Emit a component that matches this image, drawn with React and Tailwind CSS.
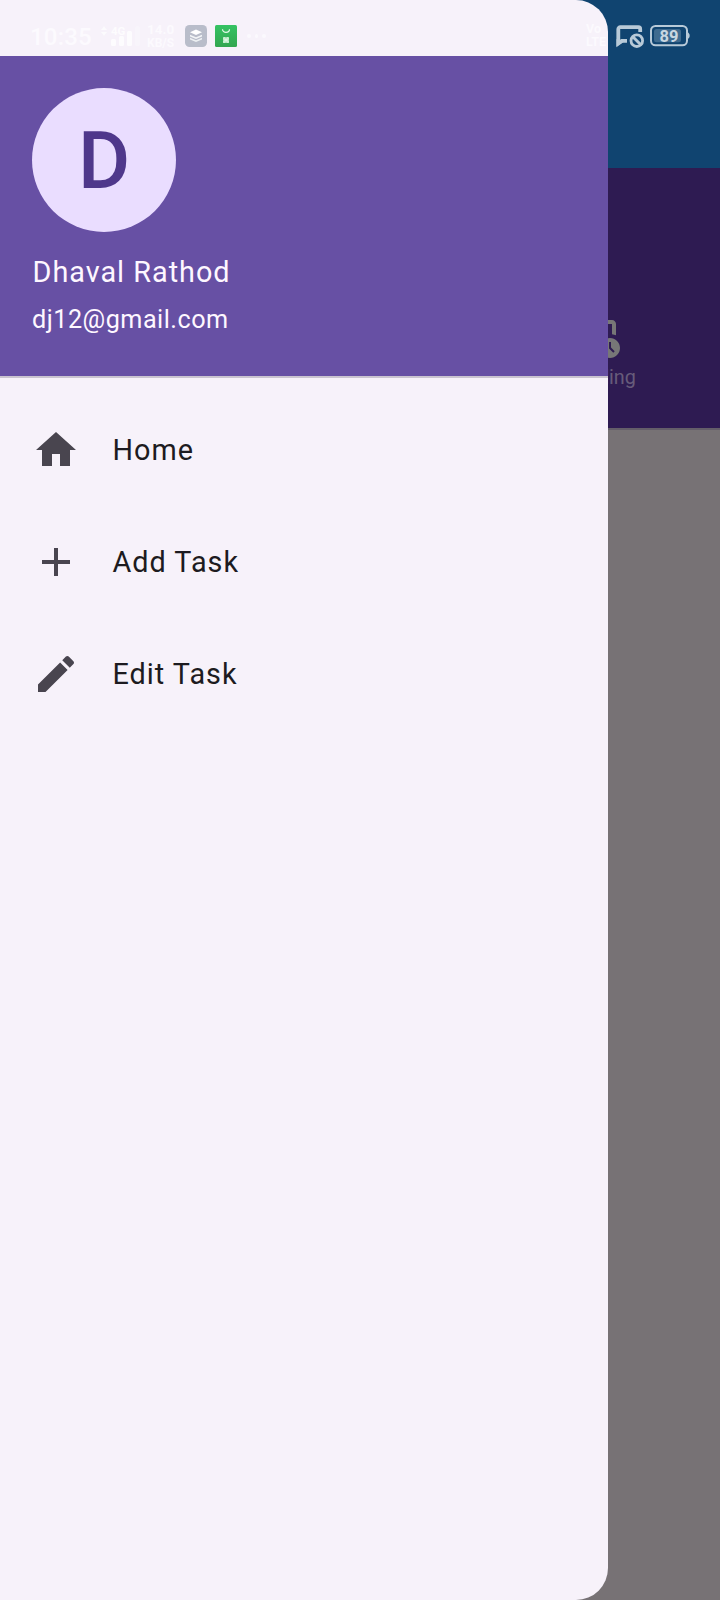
import React from "react";

function HomeIcon() {
  return (
    <svg viewBox="0 0 24 24" className="size-12 shrink-0 fill-[#49454f]">
      <path d="M10 20v-6h4v6h5v-8h3L12 3 2 12h3v8z" />
    </svg>
  );
}

function AddIcon() {
  return (
    <svg viewBox="0 0 24 24" className="size-12 shrink-0 fill-[#49454f]">
      <path d="M19 13h-6v6h-2v-6H5v-2h6V5h2v6h6v2z" />
    </svg>
  );
}

function EditIcon() {
  return (
    <svg viewBox="0 0 24 24" className="size-12 shrink-0 fill-[#49454f]">
      <path d="M3 17.25V21h3.75L17.81 9.94l-3.75-3.75L3 17.25zM20.71 7.04c.39-.39.39-1.02 0-1.41l-2.34-2.34c-.39-.39-1.02-.39-1.41 0l-1.83 1.83 3.75 3.75 1.83-1.83z" />
    </svg>
  );
}

function PendingIcon() {
  return (
    <svg viewBox="0 0 24 24" className="size-12 fill-[#777777]">
      <path d="M17 12c-2.76 0-5 2.24-5 5s2.24 5 5 5 5-2.24 5-5-2.24-5-5-5zm1.65 7.35L16.5 17.2V14h1v2.79l1.85 1.85-.7.71zM18 3h-3.18C14.4 1.84 13.3 1 12 1s-2.4.84-2.82 2H6c-1.1 0-2 .9-2 2v15c0 1.1.9 2 2 2h6.11c-.59-.57-1.07-1.25-1.42-2H6V5h2v3h8V5h2v5.08c.71.1 1.38.31 2 .6V5c0-1.1-.9-2-2-2z" />
    </svg>
  );
}

function SignalIcon() {
  return (
    <svg viewBox="0 0 40 22" className="h-[22px] w-10 fill-[#fdfcfe]">
      <path d="M0 5l3-4 3 4zM0 7h6l-3 4z" fillOpacity=".8" />
      <rect x="10" y="14" width="5" height="7" rx="1.5" />
      <rect x="18" y="11" width="5" height="10" rx="1.5" />
      <rect x="26" y="6" width="5" height="15" rx="1.5" />
      <rect x="34" y="1" width="5" height="20" rx="1.5" fillOpacity=".3" />
      <text x="10" y="9.5" fontSize="11.5" fontWeight="700">4G</text>
    </svg>
  );
}

function LayersBadge() {
  return (
    <svg viewBox="0 0 22 22" className="size-[22px]">
      <rect width="22" height="22" rx="4.5" fill="#b9bdca" />
      <path d="M5 12.8l6 2.5 6-2.5v1.6L11 17l-6-2.6z" fill="#edf0f3" />
      <path d="M5 9.7l6 2.5 6-2.5v1.7L11 14l-6-2.6z" fill="#f3f5f7" />
      <path d="M11 4.5l6 2.7-6 2.7-6-2.7z" fill="#fff" />
    </svg>
  );
}

function ShopBadge() {
  return (
    <svg viewBox="0 0 22 22" className="size-[22px]">
      <defs>
        <linearGradient id="shop" x1="0" y1="0" x2="0" y2="1">
          <stop offset="0" stopColor="#35c363" />
          <stop offset="1" stopColor="#33a650" />
        </linearGradient>
      </defs>
      <rect width="22" height="22" rx="1.5" fill="url(#shop)" />
      <path d="M7.5 4.3c0 4 7 4 7 0" fill="none" stroke="#e2f8e8" strokeWidth="1.2" />
      <rect x="8" y="12" width="2.9" height="2.9" rx=".4" fill="#c9f0d2" />
      <rect x="11.1" y="12" width="2.9" height="2.9" rx=".4" fill="#c9f0d2" />
      <rect x="8" y="15.1" width="2.9" height="2.9" rx=".4" fill="#c9f0d2" />
      <rect x="11.1" y="15.1" width="2.9" height="2.9" rx=".4" fill="#c9f0d2" />
      <circle cx="11" cy="15" r="1.5" fill="#dcf6e2" />
    </svg>
  );
}

function MessageBlockedIcon() {
  return (
    <svg viewBox="0 0 28 24" className="h-6 w-7" fill="none" stroke="#b8cad8">
      <path d="M24.2 7V4a1.8 1.8 0 0 0-1.8-1.8H4.3A2 2 0 0 0 2.3 4.2V18.5L5.8 15.9H11" strokeWidth="3.8" />
      <path d="M.5 14v7.5l7-4.5z" fill="#b8cad8" stroke="none" />
      <circle cx="20.8" cy="15.7" r="5.8" strokeWidth="2.8" />
      <path d="M16.8 11.7l8 8" strokeWidth="3" />
    </svg>
  );
}

function BatteryIcon() {
  return (
    <svg viewBox="0 0 40 22" className="h-[22px] w-10">
      <rect x="1" y="1" width="36" height="19.3" rx="4.5" fill="none" stroke="#b8cad8" strokeWidth="2" />
      <path d="M37.5 7.3c2.9 1.2 2.9 5.6 0 6.8z" fill="#b8cad8" />
      <rect x="4" y="4" width="27" height="13.2" rx="2.5" fill="#3f6b8f" />
      <text x="19" y="16.6" textAnchor="middle" fontSize="16.5" fontWeight="700" fill="#c9d7e1">89</text>
    </svg>
  );
}

function StatusBar() {
  return (
    <div className="absolute inset-x-0 top-0 flex h-14 items-start justify-between pr-[30px] pl-[30px] text-[#fcfafe]">
      <div className="flex items-start pt-[25px]">
        <span className="w-[71px] text-[24px] leading-[24px] font-medium tracking-[0.2px]">10:35</span>
        <SignalIcon />
        <div className="ml-[6px] flex w-[38px] flex-col font-bold">
          <span className="-mt-[2px] text-[13.5px] leading-[13.5px]">14.0</span>
          <span className="text-[12px] leading-[12px]">KB/S</span>
        </div>
        <LayersBadge />
        <span className="w-2" />
        <ShopBadge />
        <div className="flex gap-1 pt-[9px] pl-[10px]">
          <span className="size-[3.5px] rounded-full bg-[#fbf9fd]" />
          <span className="size-[3.5px] rounded-full bg-[#fbf9fd]" />
          <span className="size-[3.5px] rounded-full bg-[#fbf9fd]" />
        </div>
      </div>
      <div className="flex items-start pt-[25px]">
        <div className="-mt-[2px] flex w-[30px] flex-col text-[12.5px] leading-[12.5px] font-bold">
          <span>Vo</span>
          <span>LTE</span>
        </div>
        <MessageBlockedIcon />
        <span className="w-[6px]" />
        <BatteryIcon />
      </div>
    </div>
  );
}

const items = [
  { label: "Home", Icon: HomeIcon },
  { label: "Add Task", Icon: AddIcon },
  { label: "Edit Task", Icon: EditIcon },
];

function Drawer() {
  return (
    <aside className="absolute inset-y-0 left-0 flex w-[608px] flex-col overflow-hidden rounded-r-[32px] bg-[#f7f2fa] pt-14">
      <header className="flex h-[322px] flex-col border-b-2 border-[#cac4d0] bg-[#6750a4] px-8 pt-8 text-[#fef7ff]">
        <div className="flex size-36 items-center justify-center rounded-full bg-[#eaddff] pt-[2px] text-[80px] leading-none font-medium text-[#4f378b]">
          D
        </div>
        <div className="mt-[22px] pl-[0.5px] text-[28.8px] leading-[36px] tracking-[1px]">Dhaval Rathod</div>
        <div className="mt-[12px] text-[25.2px] leading-[36px] tracking-[0.5px]">dj12@gmail.com</div>
      </header>
      <nav className="flex flex-col pt-4">
        {items.map(({ label, Icon }) => (
          <div key={label} className="flex h-28 items-center gap-8 px-8 text-[28.8px] tracking-[1px] text-[#1d1b20]">
            <Icon />
            <span className="pt-[2px] pl-[0.5px]">{label}</span>
          </div>
        ))}
      </nav>
    </aside>
  );
}

export default function App() {
  return (
    <div className="relative flex h-[1600px] w-[720px] flex-col overflow-hidden bg-[#777275] font-['Roboto',sans-serif]">
      <div className="h-[168px] bg-[#104470]" />
      <div className="flex h-[262px] justify-end border-b-2 border-[#645e69] bg-[#2e1b52]">
        <div className="flex w-60 flex-col items-center pt-[146px] text-[19.8px] leading-7 text-[#675b7a]">
          <PendingIcon />
          <span className="mt-[2px]">Pending</span>
        </div>
      </div>
      <Drawer />
      <StatusBar />
    </div>
  );
}
